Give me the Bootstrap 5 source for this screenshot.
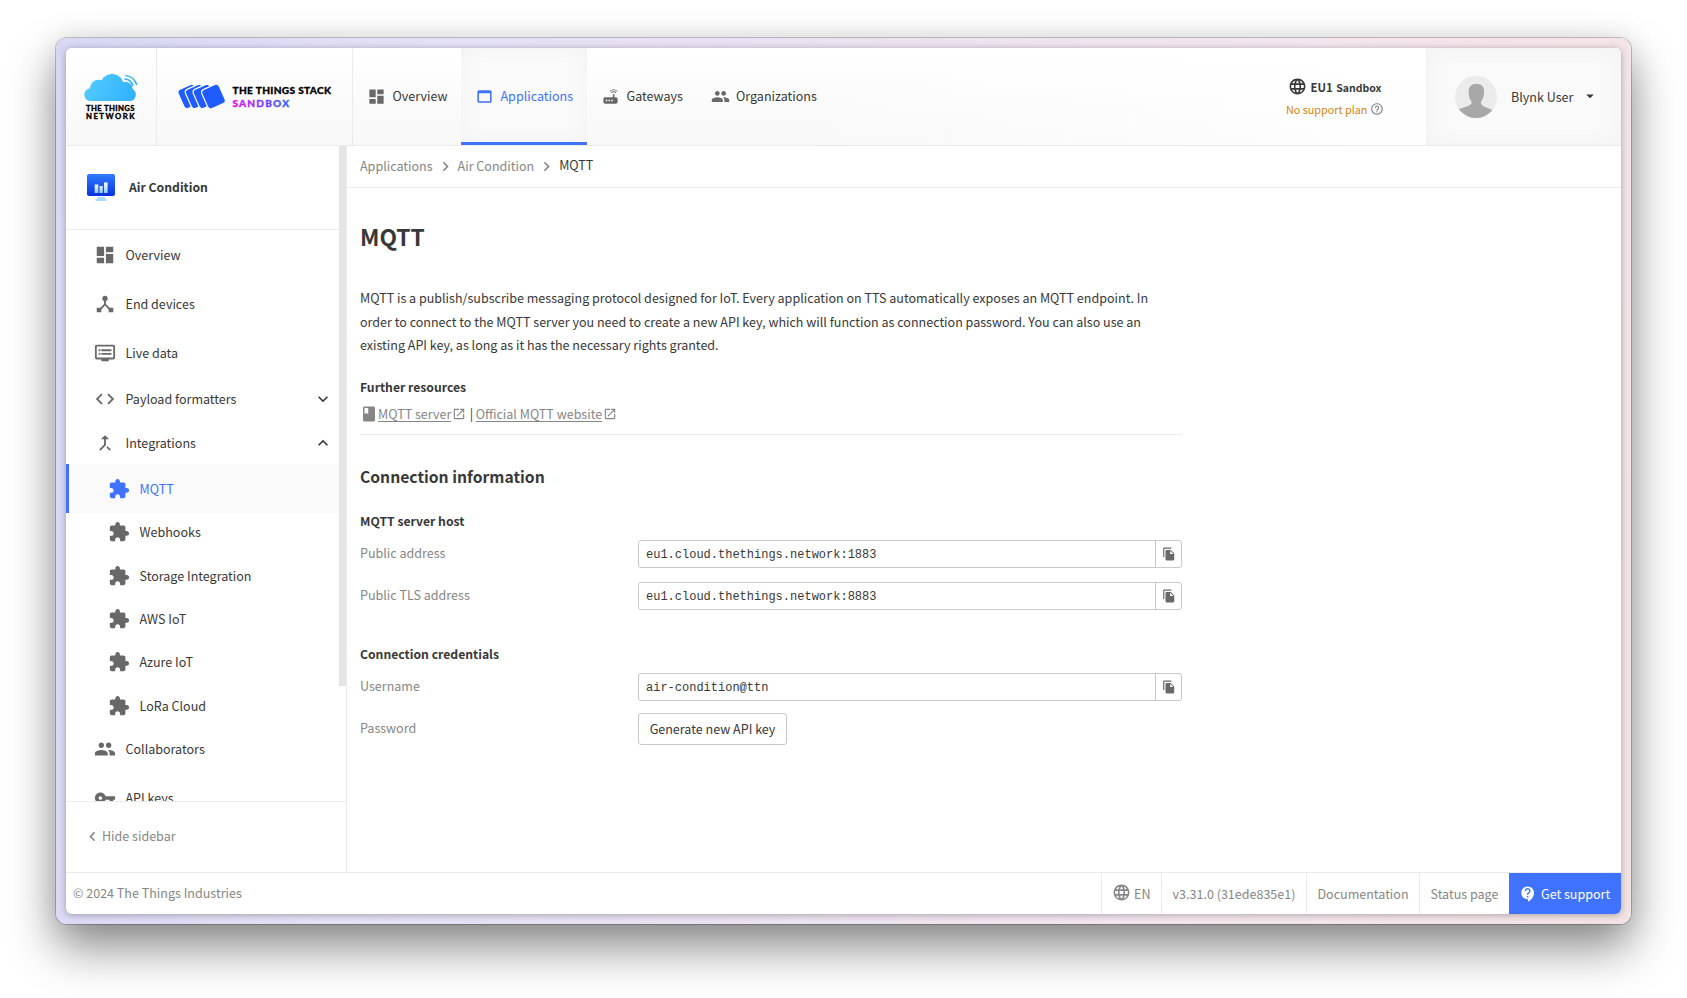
<!DOCTYPE html>
<html lang="en">
<head>
<meta charset="utf-8">
<title>MQTT - The Things Stack Sandbox</title>
<meta name="viewport" content="width=device-width, initial-scale=1">
<link href="https://cdn.jsdelivr.net/npm/bootstrap@5.3.0/dist/css/bootstrap.min.css" rel="stylesheet">
<style>
  :root { --line: #ebebeb; --ink: #383838; --soft: #868686; --icon: #686868; --brand: #3f73ff; }
  body { width: 1687px; height: 998px; overflow: hidden; background: #fff; color: var(--ink);
    font-family: "Noto Sans CJK JP", "Open Sans", sans-serif; font-size: 12.54px; line-height: 20px; padding: 38px 56px; }
  svg { display: block; flex: none; }
  .mi { width: 22px; height: 22px; fill: currentColor; }
  .mi-19 { width: 19px; height: 19px; }
  .bezel { width: 1575px; height: 886px; padding: 10px; border-radius: 11px;
    background: linear-gradient(97deg, #d8d8f5 0%, #e4e0f6 22%, #ebe2f1 45%, #f4e6ee 75%, #f3e3e4 100%);
    box-shadow: 0 0 0 1px rgba(0,0,0,.2), 0 24px 48px rgba(0,0,0,.45), 0 2px 30px rgba(0,0,0,.1); }
  .app { height: 866px; border-radius: 6px; overflow: hidden; background: #fff; box-shadow: 0 1px 7px rgba(0,0,0,.3); }
  .topbar { height: 98px; border-bottom: 1px solid var(--line);
    background: linear-gradient(90deg, rgba(255,255,255,0) 45%, rgba(255,255,255,.85) 85%), linear-gradient(#fff, #f8f8f8); }
  .logo-a { width: 91px; border-right: 1px solid var(--line); }
  .logo-b { width: 196px; border-right: 1px solid var(--line); }
  .tab { color: var(--ink); text-decoration: none; height: 97px; padding-bottom: 2px; }
  .tab svg { color: var(--icon); margin-top: 1px; }
  .tab-on, .tab-on svg { color: var(--brand); }
  .tab-on { width: 126px; background: #fafafa; border-bottom: 3px solid var(--brand); padding-top: 1px; padding-bottom: 0; box-shadow: inset 0 0 22px rgba(0,0,0,.035); }
  .plan { width: 122px; margin-right: 32px; padding-top: 3px; }
  .user { width: 195px; background: #fafafa; box-shadow: inset 0 0 25px rgba(0,0,0,.04); border-left: 1px solid #f2f2f2; }
  .side { width: 281px; border-right: 1px solid var(--line); }
  .side-head { height: 84px; width: 273px; border-bottom: 1px solid var(--line); padding-left: 21px; font-size: 12.2px; }
  .side-head span { margin: -2px 0 0 14px; }
  .side-list { height: 655px; }
  .scrollbox { height: 655px; width: 273px; overflow: hidden; }
  .thumb { width: 7px; height: 540px; background: #e5e5e5; }
  .item { height: 49px; padding: 0 6px 0 27.5px; gap: 10px; color: var(--ink); text-decoration: none; }
  .item svg { color: var(--icon); }
  .item-s { height: 43.5px; }
  .item-sub { padding-left: 41.5px; }
  .item-nudge { padding-top: 1px; }
  .item-on { background: #fafafa; border-left: 3px solid var(--brand); padding-left: 38.5px; margin-bottom: -3px; }
  .item-on, .item-on svg { color: var(--brand); }
  .item-up { margin-top: -3.5px; }
  .item .caret { width: 20px; height: 20px; color: var(--ink); }
  .hide-row { height: 71px; border-top: 1px solid var(--line); color: var(--soft); padding: 0 0 2px 17px; }
  .crumbs { height: 42px; border-bottom: 1px solid var(--line); padding: 0 0 2px 13px; color: var(--soft); }
  .crumbs svg { margin: 2px 3px 0; width: 19px; height: 19px; }
  .page { width: 822px; margin-left: 13px; padding-top: 32px; }
  h1 { font-size: 22.8px; line-height: 34px; font-weight: 600; margin: 0 0 32px; }
  .lede { line-height: 23.6px; margin: 0 0 20px; white-space: nowrap; }
  h4 { font-size: 12.2px; line-height: 20px; font-weight: 600; margin: 0; }
  h3 { font-size: 15.7px; line-height: 24px; font-weight: 600; margin: 0; }
  .res { height: 38px; padding-bottom: 2px; color: var(--soft); border-bottom: 1px solid var(--line); }
  .res a { color: var(--soft); text-underline-offset: 2px; }
  .lab { width: 278px; color: var(--soft); padding-bottom: 2px; }
  .field { width: 544px; height: 28px; border: 1px solid #c9c9c9; border-radius: 3px; font-family: "Liberation Mono", monospace; font-size: 12px; }
  .field span { padding: 2px 0 0 7px; }
  .field button { width: 26px; height: 26px; border: 0; border-left: 1px solid #c9c9c9; background: none; color: var(--icon); padding: 0; }
  .gen { width: 149px; height: 32px; border: 1px solid #c9c9c9; border-radius: 3px; background: #fff; color: var(--ink); font-size: 12.55px; padding: 0; }
  .foot { height: 42px; border-top: 1px solid var(--line); color: var(--soft); }
  .foot .cell { height: 41px; border-left: 1px solid var(--line); }
  .foot .support { background: var(--brand); color: #fff; border-left: 0; width: 112px; }
</style>
</head>
<body>
<svg width="0" height="0" class="position-absolute">
  <defs>
    <symbol id="dash" viewBox="0 0 24 24"><path d="M3 13h8V3H3v10zm0 8h8v-6H3v6zm10 0h8V11h-8v10zm0-18v6h8V3h-8z"/></symbol>
    <symbol id="hub" viewBox="0 0 24 24"><path d="M17 16l-4-4V8.82C14.16 8.4 15 7.3 15 6c0-1.66-1.34-3-3-3S9 4.34 9 6c0 1.3.84 2.4 2 2.82V12l-4 4H3v5h5v-3.05l4-4.2 4 4.2V21h5v-5h-4z"/></symbol>
    <symbol id="dvr" viewBox="0 0 24 24"><path d="M21 3H3c-1.1 0-2 .9-2 2v12c0 1.1.9 2 2 2h5v2h8v-2h5c1.1 0 1.99-.9 1.99-2L23 5c0-1.1-.9-2-2-2zm0 14H3V5h18v12zm-2-9H8v2h11V8zm0 4H8v2h11v-2zM7 8H5v2h2V8zm0 4H5v2h2v-2z"/></symbol>
    <symbol id="code" viewBox="0 0 24 24"><path d="M9.4 16.6L4.8 12l4.6-4.6L8 6l-6 6 6 6 1.4-1.4zm5.2 0l4.6-4.6-4.6-4.6L16 6l6 6-6 6-1.4-1.4z"/></symbol>
    <symbol id="merge" viewBox="0 0 24 24"><path d="M17 20.41L18.41 19 15 15.59 13.59 17 17 20.41zM7.5 8H11v5.59L5.59 19 7 20.41l6-6V8h3.5L12 3.5 7.5 8z"/></symbol>
    <symbol id="ext" viewBox="0 0 24 24"><path d="M20.5 11H19V7c0-1.1-.9-2-2-2h-4V3.5C13 2.12 11.88 1 10.5 1S8 2.12 8 3.5V5H4c-1.1 0-1.99.9-1.99 2v3.8H3.5c1.49 0 2.7 1.21 2.7 2.7s-1.21 2.7-2.7 2.7H2V20c0 1.1.9 2 2 2h3.8v-1.5c0-1.49 1.21-2.7 2.7-2.7 1.49 0 2.7 1.21 2.7 2.7V22H17c1.1 0 2-.9 2-2v-4h1.5c1.38 0 2.5-1.12 2.5-2.5S21.88 11 20.5 11z"/></symbol>
    <symbol id="people" viewBox="0 0 24 24"><path d="M16 11c1.66 0 2.99-1.34 2.99-3S17.66 5 16 5c-1.66 0-3 1.34-3 3s1.34 3 3 3zm-8 0c1.66 0 2.99-1.34 2.99-3S9.66 5 8 5C6.34 5 5 6.34 5 8s1.34 3 3 3zm0 2c-2.33 0-7 1.17-7 3.5V19h14v-2.5c0-2.33-4.67-3.5-7-3.5zm8 0c-.29 0-.62.02-.97.05 1.16.84 1.97 1.97 1.97 3.45V19h6v-2.5c0-2.33-4.67-3.5-7-3.5z"/></symbol>
    <symbol id="key" viewBox="0 0 24 24"><path d="M12.65 10C11.83 7.67 9.61 6 7 6c-3.31 0-6 2.69-6 6s2.69 6 6 6c2.61 0 4.83-1.67 5.65-4H17v4h4v-4h2v-4H12.65zM7 14c-1.1 0-2-.9-2-2s.9-2 2-2 2 .9 2 2-.9 2-2 2z"/></symbol>
    <symbol id="web" viewBox="0 0 24 24"><path d="M19 4H5c-1.11 0-2 .9-2 2v12c0 1.1.89 2 2 2h14c1.1 0 2-.9 2-2V6c0-1.1-.89-2-2-2zm0 14H5V8h14v10z"/></symbol>
    <symbol id="router" viewBox="0 0 24 24"><path d="M20.2 5.9l.8-.8C19.6 3.7 17.8 3 16 3s-3.6.7-5 2.1l.8.8C13 4.8 14.5 4.2 16 4.2s3 .6 4.2 1.7zm-.9.8c-.9-.9-2.1-1.4-3.3-1.4s-2.4.5-3.3 1.4l.8.8c.7-.7 1.6-1 2.5-1 .9 0 1.8.3 2.5 1l.8-.8zM19 13h-2V9h-2v4H5c-1.1 0-2 .9-2 2v4c0 1.1.9 2 2 2h14c1.1 0 2-.9 2-2v-4c0-1.1-.9-2-2-2zM8 18H6v-2h2v2zm3.5 0h-2v-2h2v2zm3.5 0h-2v-2h2v2z"/></symbol>
    <symbol id="globe" viewBox="0 0 24 24"><path d="M11.99 2C6.47 2 2 6.48 2 12s4.47 10 9.99 10C17.52 22 22 17.52 22 12S17.52 2 11.99 2zm6.93 6h-2.95c-.32-1.25-.78-2.45-1.38-3.56 1.84.63 3.37 1.91 4.33 3.56zM12 4.04c.83 1.2 1.48 2.53 1.91 3.96h-3.82c.43-1.43 1.08-2.76 1.91-3.96zM4.26 14C4.1 13.36 4 12.69 4 12s.1-1.36.26-2h3.38c-.08.66-.14 1.32-.14 2 0 .68.06 1.34.14 2H4.26zm.82 2h2.95c.32 1.25.78 2.45 1.38 3.56-1.84-.63-3.37-1.9-4.33-3.56zm2.95-8H5.08c.96-1.66 2.49-2.93 4.33-3.56C8.81 5.55 8.35 6.75 8.03 8zM12 19.96c-.83-1.2-1.48-2.53-1.91-3.96h3.82c-.43 1.43-1.08 2.76-1.91 3.96zM14.34 14H9.66c-.09-.66-.16-1.32-.16-2 0-.68.07-1.35.16-2h4.68c.09.65.16 1.32.16 2 0 .68-.07 1.34-.16 2zm.25 5.56c.6-1.11 1.06-2.31 1.38-3.56h2.95c-.96 1.65-2.49 2.93-4.33 3.56zM16.36 14c.08-.66.14-1.32.14-2 0-.68-.06-1.34-.14-2h3.38c.16.64.26 1.31.26 2s-.1 1.36-.26 2h-3.38z"/></symbol>
    <symbol id="help" viewBox="0 0 24 24"><path d="M11 18h2v-2h-2v2zm1-16C6.48 2 2 6.48 2 12s4.48 10 10 10 10-4.48 10-10S17.52 2 12 2zm0 18c-4.41 0-8-3.59-8-8s3.59-8 8-8 8 3.59 8 8-3.59 8-8 8zm0-14c-2.21 0-4 1.79-4 4h2c0-1.1.9-2 2-2s2 .9 2 2c0 2-3 1.75-3 5h2c0-2.25 3-2.5 3-5 0-2.21-1.79-4-4-4z"/></symbol>
    <symbol id="support" viewBox="0 0 24 24"><path d="M11.5 2C6.81 2 3 5.81 3 10.5S6.81 19 11.5 19h.5v3c4.86-2.34 8-7 8-11.5C20 5.81 16.19 2 11.5 2zm1 14.5h-2v-2h2v2zm0-3.5h-2c0-3.25 3-3 3-5 0-1.1-.9-2-2-2s-2 .9-2 2h-2c0-2.21 1.79-4 4-4s4 1.79 4 4c0 2.5-3 2.75-3 5z"/></symbol>
    <symbol id="copy" viewBox="0 0 24 24"><path d="M16 1H4c-1.1 0-2 .9-2 2v14h2V3h12V1zm-1 4l6 6v10c0 1.1-.9 2-2 2H7.99C6.89 23 6 22.1 6 21V7c0-1.1.9-2 1.99-2h7zm-1 7h5.5L14 6.5V12z"/></symbol>
    <symbol id="class" viewBox="0 0 24 24"><path d="M18 2H6c-1.1 0-2 .9-2 2v16c0 1.1.9 2 2 2h12c1.1 0 2-.9 2-2V4c0-1.1-.9-2-2-2zM6 4h5v8l-2.5-1.5L6 12V4z"/></symbol>
    <symbol id="open" viewBox="0 0 24 24"><path d="M19 19H5V5h7V3H5c-1.11 0-2 .9-2 2v14c0 1.1.89 2 2 2h14c1.1 0 2-.9 2-2v-7h-2v7zM14 3v2h3.59l-9.83 9.83 1.41 1.41L19 6.41V10h2V3h-7z"/></symbol>
    <symbol id="down" viewBox="0 0 24 24"><path d="M16.59 8.59L12 13.17 7.41 8.59 6 10l6 6 6-6z"/></symbol>
    <symbol id="up" viewBox="0 0 24 24"><path d="M12 8l-6 6 1.41 1.41L12 10.83l4.59 4.58L18 14z"/></symbol>
    <symbol id="right" viewBox="0 0 24 24"><path d="M10 6L8.59 7.41 13.17 12l-4.58 4.59L10 18l6-6z"/></symbol>
    <symbol id="left" viewBox="0 0 24 24"><path d="M15.41 7.41L14 6l-6 6 6 6 1.41-1.41L10.83 12z"/></symbol>
    <symbol id="drop" viewBox="0 0 24 24"><path d="M7 10l5 5 5-5z"/></symbol>
    <linearGradient id="sky" gradientUnits="userSpaceOnUse" x1="84" y1="80" x2="136" y2="100"><stop stop-color="#55ccff"/><stop offset="1" stop-color="#2fb0ff"/></linearGradient>
    <linearGradient id="sand"><stop stop-color="#e010f0"/><stop offset="1" stop-color="#2f62ff"/></linearGradient>
    <linearGradient id="scr" x2="0" y2="1"><stop stop-color="#2f7dff"/><stop offset="1" stop-color="#0a30e0"/></linearGradient>
    <linearGradient id="bar" x2="0" y2="1"><stop stop-color="#fff"/><stop offset="1" stop-color="#8ecbff"/></linearGradient>
  </defs>
</svg>

<div class="bezel">
 <div class="app d-flex flex-column">
  <header class="topbar d-flex flex-shrink-0">
    <div class="logo-a">
      <svg width="90" height="97" viewBox="66 48 90 97">
        <g fill="url(#sky)"><circle cx="90.700" cy="94.600" r="6.400"/><circle cx="98.500" cy="88.300" r="8.500"/><circle cx="112" cy="85.500" r="11.500"/><circle cx="125.500" cy="89" r="7.200"/><circle cx="129.500" cy="94.600" r="6.400"/><path d="M91 89h38v12H91z"/></g>
        <g fill="none" stroke="#38b4ff" stroke-width="1.700"><path d="M125.300 75.500a13 13 0 0 1 11.500 9.500"/><path d="M124.300 79a9.500 9.500 0 0 1 8.700 7"/></g>
        <g font-family="Lato, sans-serif" font-weight="900" font-size="7.700" fill="#000" stroke="#000" stroke-width=".3">
          <text x="86" y="110.800" textLength="48.500">THE THINGS</text><text x="86" y="118.800" textLength="48.500">NETWORK</text></g>
      </svg>
    </div>
    <div class="logo-b">
      <svg width="195" height="97" viewBox="157 48 195 97">
        <g fill="#1f5cff" stroke="#fdfdfd" stroke-width="1.200">
          <rect x="-9" y="-10.500" width="18" height="21" rx="3.500" transform="translate(189.300 96.500) rotate(-24)"/>
          <rect x="-9" y="-10.500" width="18" height="21" rx="3.500" transform="translate(196.700 96.500) rotate(-24)"/>
          <rect x="-9" y="-10.500" width="18" height="21" rx="3.500" transform="translate(204.500 96.500) rotate(-24)"/>
          <rect x="-9.500" y="-10.500" width="19" height="21" rx="3.500" transform="translate(213.500 96.500) rotate(-24)"/>
        </g>
        <g font-family="Lato, sans-serif" font-weight="900" font-size="10.100">
          <text x="232.500" y="93.700" textLength="98.500" stroke="#000" stroke-width=".3">THE THINGS STACK</text><text x="232.500" y="106.600" textLength="56.500" fill="url(#sand)" stroke="url(#sand)" stroke-width=".3">SANDBOX</text></g>
      </svg>
    </div>
    <nav class="d-flex">
      <a class="tab d-flex align-items-center" style="width:108px;padding-left:13.500px;gap:7px"><svg class="mi mi-19"><use href="#dash"/></svg>Overview</a>
      <a class="tab tab-on d-flex align-items-center" style="padding-left:13.500px;gap:7px"><svg class="mi mi-19"><use href="#web"/></svg>Applications</a>
      <a class="tab d-flex align-items-center" style="width:108px;padding-left:14px;gap:6.500px"><svg class="mi mi-19"><use href="#router"/></svg>Gateways</a>
      <a class="tab d-flex align-items-center" style="padding-left:15.500px;gap:6.500px"><svg class="mi mi-19"><use href="#people"/></svg>Organizations</a>
    </nav>
    <div class="plan ms-auto d-flex flex-column justify-content-center">
      <div class="d-flex align-items-center fw-semibold" style="font-size:11.400px;height:22px;padding-left:16px;gap:3.500px"><svg class="mi mi-19" style="margin-top:-2px"><use href="#globe"/></svg><span>EU1</span><span style="font-size:10.500px;padding-top:1px">Sandbox</span></div>
      <div class="d-flex align-items-center" style="font-size:10.800px;height:22px;padding-left:14px;gap:3px;color:#d3860b">No support plan<svg class="mi" style="width:14px;height:14px;color:#868686"><use href="#help"/></svg></div>
    </div>
    <div class="user d-flex align-items-center">
      <svg width="42" height="42" viewBox="0 0 42 42" style="margin-left:28px"><defs><clipPath id="round"><circle cx="21" cy="21" r="21"/></clipPath></defs><circle cx="21" cy="21" r="21" fill="#ebebeb"/><path clip-path="url(#round)" fill="#a8a8a8" d="M21.500 8c4.500-.8 8 2.500 7.500 8 0 4-.8 7-3 9.500v2c1 3 6 4 11.500 6.500L42 42H0l4-9c6-2 11-3 12.500-5.500v-2C14.300 23 13.700 20 13.700 16c-.4-5 3-8.500 7.800-8z"/></svg>
      <span style="margin-left:14px">Blynk User</span>
      <svg class="mi" style="width:18px;height:18px;margin-left:7.500px;margin-top:-2px"><use href="#drop"/></svg>
    </div>
  </header>

  <div class="d-flex flex-grow-1">
    <aside class="side d-flex flex-column flex-shrink-0">
      <div class="side-list d-flex">
        <div class="scrollbox">
          <div class="side-head d-flex align-items-center fw-semibold">
            <svg width="28" height="27" viewBox="0 0 28 27"><rect width="28" height="22" rx="2" fill="url(#scr)"/><path fill="#a9dcff" d="M10 23h8v2h1.500v2h-11v-2H10z"/><g fill="url(#bar)"><path d="M7.700 10.500h3.600V19H7.700z"/><path d="M12.500 12h3.300v7h-3.300zM17 8.500h3.600V19H17z"/></g></svg>
            <span>Air Condition</span>
          </div>
          <a class="item d-flex align-items-center"><svg class="mi"><use href="#dash"/></svg>Overview</a>
          <a class="item d-flex align-items-center"><svg class="mi"><use href="#hub"/></svg>End devices</a>
          <a class="item d-flex align-items-center"><svg class="mi"><use href="#dvr"/></svg>Live data</a>
          <a class="item item-s d-flex align-items-center"><svg class="mi"><use href="#code"/></svg>Payload formatters<svg class="mi caret ms-auto"><use href="#down"/></svg></a>
          <a class="item item-s item-nudge d-flex align-items-center"><svg class="mi"><use href="#merge"/></svg>Integrations<svg class="mi caret ms-auto"><use href="#up"/></svg></a>
          <a class="item item-sub item-on d-flex align-items-center"><svg class="mi"><use href="#ext"/></svg>MQTT</a>
          <a class="item item-s item-sub d-flex align-items-center"><svg class="mi"><use href="#ext"/></svg>Webhooks</a>
          <a class="item item-s item-sub item-nudge d-flex align-items-center"><svg class="mi"><use href="#ext"/></svg>Storage Integration</a>
          <a class="item item-s item-sub d-flex align-items-center"><svg class="mi"><use href="#ext"/></svg>AWS IoT</a>
          <a class="item item-s item-sub d-flex align-items-center"><svg class="mi"><use href="#ext"/></svg>Azure IoT</a>
          <a class="item item-s item-sub d-flex align-items-center"><svg class="mi"><use href="#ext"/></svg>LoRa Cloud</a>
          <a class="item item-up d-flex align-items-center"><svg class="mi"><use href="#people"/></svg>Collaborators</a>
          <a class="item d-flex align-items-center"><svg class="mi"><use href="#key"/></svg>API keys</a>
        </div>
        <div class="thumb"></div>
      </div>
      <div class="hide-row d-flex align-items-center"><svg class="mi" style="width:19px;height:19px"><use href="#left"/></svg>Hide sidebar</div>
    </aside>

    <main class="flex-grow-1">
      <div class="crumbs d-flex align-items-center">
        <span>Applications</span><svg class="mi"><use href="#right"/></svg>
        <span>Air Condition</span><svg class="mi"><use href="#right"/></svg>
        <span style="color:#383838;padding-bottom:1px">MQTT</span>
      </div>
      <div class="page">
        <h1>MQTT</h1>
        <p class="lede">MQTT is a publish/subscribe messaging protocol designed for IoT. Every application on TTS automatically exposes an MQTT endpoint. In<br>order to connect to the MQTT server you need to create a new API key, which will function as connection password. You can also use an<br>existing API key, as long as it has the necessary rights granted.</p>
        <h4>Further resources</h4>
        <div class="res d-flex align-items-center"><svg class="mi" style="width:18px;height:18px"><use href="#class"/></svg><a href="#">MQTT server</a><svg class="mi" style="width:14px;height:14px;margin-left:1px;margin-top:-1px"><use href="#open"/></svg><span style="color:#383838;margin:0 2.500px 0 3.500px">|</span><a href="#">Official MQTT website</a><svg class="mi" style="width:14px;height:14px;margin-left:1px;margin-top:-1px"><use href="#open"/></svg></div>
        <h3 style="margin-top:30px">Connection information</h3>
        <h4 style="margin-top:22px">MQTT server host</h4>
        <div class="d-flex align-items-center" style="margin-top:9px"><span class="lab">Public address</span><div class="field d-flex align-items-center justify-content-between"><span>eu1.cloud.thethings.network:1883</span><button><svg class="mi mx-auto" style="width:14px;height:14px"><use href="#copy"/></svg></button></div></div>
        <div class="d-flex align-items-center" style="margin-top:14px"><span class="lab">Public TLS address</span><div class="field d-flex align-items-center justify-content-between"><span>eu1.cloud.thethings.network:8883</span><button><svg class="mi mx-auto" style="width:14px;height:14px"><use href="#copy"/></svg></button></div></div>
        <h4 style="margin-top:34px">Connection credentials</h4>
        <div class="d-flex align-items-center" style="margin-top:9px"><span class="lab">Username</span><div class="field d-flex align-items-center justify-content-between"><span>air-condition@ttn</span><button><svg class="mi mx-auto" style="width:14px;height:14px"><use href="#copy"/></svg></button></div></div>
        <div class="d-flex align-items-center" style="margin-top:12px"><span class="lab">Password</span><button class="gen">Generate new API key</button></div>
      </div>
    </main>
  </div>

  <footer class="foot d-flex align-items-center flex-shrink-0">
    <span class="me-auto" style="padding:0 0 2px 7px">© 2024 The Things Industries</span>
    <div class="cell d-flex align-items-center" style="width:60px;padding-left:10px;gap:3px"><svg class="mi mi-19" style="margin-top:-3px"><use href="#globe"/></svg>EN</div>
    <div class="cell d-flex align-items-center justify-content-center" style="width:145px">v3.31.0 (31ede835e1)</div>
    <div class="cell d-flex align-items-center justify-content-center" style="width:113px">Documentation</div>
    <div class="cell d-flex align-items-center justify-content-center" style="width:90px">Status page</div>
    <div class="cell support d-flex align-items-center" style="padding-left:10px;gap:4px"><svg class="mi" style="width:18px;height:18px"><use href="#support"/></svg>Get support</div>
  </footer>
 </div>
</div>
<script src="https://cdn.jsdelivr.net/npm/bootstrap@5.3.0/dist/js/bootstrap.bundle.min.js"></script>
</body>
</html>
